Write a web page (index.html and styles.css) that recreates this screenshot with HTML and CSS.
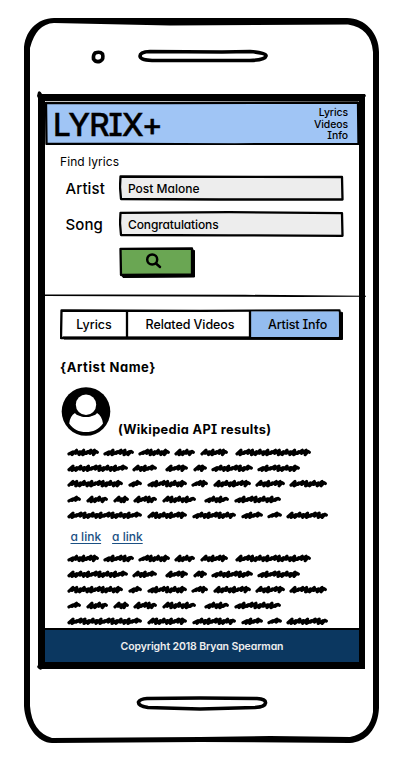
FILE: index.html
```html
<!DOCTYPE html>
<html lang="en">
<head>
<meta charset="utf-8">
<title>LYRIX+</title>
<link rel="stylesheet" href="styles.css">
</head>
<body>
<div class="phone">
  <svg class="frame" viewBox="0 0 402 768" aria-hidden="true">
    <path fill-rule="evenodd" d="M54 18H347C365 18 379 33 379 52V708C378 729 366 742 350 743L200 742L52 743C38 743 25 726 24 706V50C24 32 37 18 54 18ZM54 23Q36 24 30 48V706Q32 732 52 738L200 737L270 736L350 737Q370 733 373 712V52Q371 28 348 24.500L170 25.500Z"/>
    <path fill-rule="evenodd" d="M37 96L38 92Q40 90 42 94L365 94L366 96L365 97V669L42 669Q40 671 37 667L38 665V98ZM45 101V662H359V101Z"/>
    <g class="pen">
      <path d="M95 53Q100 51 102.500 54Q104 59 100.500 61Q96 63 93.500 59Q93 55 95 53Z"/>
      <path d="M150 51.500L222 52L250 51.500Q267 53 266 56Q265 60 250 60.500L152 60.500Q140 60 140 56Q140 52 150 51.500Z"/>
      <path d="M147 698.500L200 698L257 698.500Q266 699 265.500 703Q265 707 255 707.500L200 709L148 707.500Q138 706 138.500 702Q140 699 147 698.500Z"/>
    </g>
  </svg>
  <div class="screen">
    <header class="header">
      <svg class="sketch" viewBox="0 0 314 44" aria-hidden="true"><path d="M1 1.800L120 2L313 1.500L313.500 43L190 43.300L80 43L1.500 43Z"/></svg>
      <h1 class="brand">LYRIX+</h1>
      <nav class="nav"><span>Lyrics</span><span>Videos</span><span>Info</span></nav>
    </header>
    <section class="search">
      <p class="hint">Find lyrics</p>
      <div class="row">
        <label class="label artist">Artist</label>
        <div class="field">
          <svg class="sketch" viewBox="0 0 225 26" aria-hidden="true"><path d="M1.500 1.500L223 2L223.500 24.500L100 24.500L2 24L1 12Z"/></svg>
          <span class="post">Post Malone</span>
        </div>
      </div>
      <div class="row">
        <label class="label song">Song</label>
        <div class="field">
          <svg class="sketch" viewBox="0 0 225 26" aria-hidden="true"><path d="M1.500 1.800L110 1.200L223 2.200L223.500 24.800L110 24.300L2 24L1 12Z"/></svg>
          <span class="congrats">Congratulations</span>
        </div>
      </div>
      <div class="button">
        <svg class="sketch" viewBox="0 0 77 32" aria-hidden="true"><path class="shade" d="M73 2.500L75.500 3.500V30L4 30.500L3 28L73 27Z"/><path d="M1.500 1.800L73 1.500L73 27.500L2 28Z"/></svg>
        <svg class="lens" viewBox="0 0 16 16" aria-hidden="true"><circle cx="6.700" cy="6.500" r="5"/><path d="M10.500 10.500L14.500 14"/></svg>
      </div>
    </section>
    <svg class="rule" viewBox="0 0 321 4" aria-hidden="true"><path d="M0 .6L60 .5L200 .8L321 1.800L321 2.800L250 3L0 2.100Z"/></svg>
    <nav class="tabs">
      <svg class="sketch" viewBox="0 0 284 32" aria-hidden="true"><path class="shade" d="M280 3L282.500 3.500V30.500L4 30L3 28L280 28Z"/><path d="M1.500 1.500L140 1.800L279.500 1.500L280 29L1 29Z"/><path class="active" d="M190 2.500H278.800V28H190Z"/><path d="M67 2V29M190 2V29"/></svg>
      <span class="tab t1">Lyrics</span><span class="tab t2">Related Videos</span><span class="tab t3">Artist Info</span>
    </nav>
    <main class="content">
      <h2 class="name">{Artist Name}</h2>
      <div class="profile">
        <svg class="avatar" viewBox="0 0 50 50" aria-hidden="true"><circle cx="25" cy="24.500" r="24.300"/><path class="white" d="M14 26C17 31 33 31 36 26Q41 29 42 36.500C38 42.500 32 45 25 45C18 45 12 42.500 8.200 36.500Q9 29 14 26Z"/><circle cx="25" cy="17.700" r="12.300"/><circle class="white" cx="25" cy="17.700" r="10.200"/></svg>
        <h3 class="source">(Wikipedia API results)</h3>
      </div>
      <svg class="scribble" viewBox="0 0 270 78" aria-hidden="true"></svg>
      <div class="links"><a>a link</a><a>a link</a></div>
      <svg class="scribble" viewBox="0 0 270 78" aria-hidden="true"></svg>
    </main>
    <footer class="footer"><span>Copyright 2018 Bryan Spearman</span></footer>
  </div>
</div>
<script src="script.js"></script>
</body>
</html>
```
FILE: styles.css
```css
* { box-sizing: border-box; }
body { margin: 0; background: #fff; color: #000; font-family: Inter, "Noto Sans", sans-serif; font-feature-settings: "cv11", "cv08"; }
h1, h2, h3, p { margin: 0; }
svg { display: block; }
.phone { position: relative; width: 402px; height: 768px; padding: 101px 43px 0 45px; overflow: hidden; }
.frame { position: absolute; left: 0; top: 0; width: 402px; height: 768px; }
.pen { fill: none; stroke: #000; stroke-width: 3.6; stroke-linejoin: round; }
.screen { position: relative; width: 314px; height: 561px; display: flex; flex-direction: column; white-space: nowrap; }
.sketch { position: absolute; inset: 0; width: 100%; height: 100%; stroke: #000; stroke-width: 2.3; stroke-linejoin: round; fill: none; }
.sketch .shade { fill: #000; stroke-width: 1; }
.sketch .active { fill: #94bcef; stroke: none; }
.header { position: relative; height: 44px; display: flex; justify-content: space-between; padding: 5px 11px 0 8px; }
.header .sketch { fill: #a0c5f5; }
.brand { position: relative; font-size: 31.5px; line-height: 37px; font-weight: 500; letter-spacing: -1px; -webkit-text-stroke: .4px #000; }
.nav { position: relative; display: flex; flex-direction: column; align-items: flex-end; padding-top: 1px; font-size: 10.4px; line-height: 11.6px; font-weight: 500; letter-spacing: -.05px; }
.search { height: 149px; padding: 10px 0 0 15px; }
.hint { font-size: 12px; line-height: 14px; height: 20px; font-weight: 400; letter-spacing: .08px; }
.row { display: flex; height: 36px; }
.label { width: 59px; padding: 2px 0 0 5.500px; font-size: 15px; line-height: 24px; font-weight: 500; letter-spacing: .1px; }
.field { position: relative; width: 225px; height: 26px; padding-left: 9px; font-size: 12px; line-height: 28px; font-weight: 500; }
.field .sketch { fill: #ededed; }
.field span { position: relative; }
.congrats { letter-spacing: -.12px; }
.button { position: relative; margin-left: 59px; width: 77px; height: 32px; }
.button .sketch { fill: #6aa653; }
.lens { position: relative; left: 26px; top: 6px; width: 17px; height: 16px; fill: none; stroke: #000; stroke-width: 2.5; stroke-linecap: round; }
.rule { width: 321px; height: 4px; flex: none; }
.tabs { position: relative; width: 284px; height: 32px; margin: 11px 0 0 15px; display: flex; flex: none; font-size: 12.5px; line-height: 31px; font-weight: 500; }
.tab { position: relative; text-align: center; }
.t1 { width: 67px; padding-left: 1px; }
.t2 { width: 123px; padding-left: 3px; letter-spacing: -.08px; }
.t3 { width: 94px; padding-left: 1px; letter-spacing: -.15px; }
.content { padding: 18px 0 0 15px; }
.name { font-size: 13px; line-height: 16px; font-weight: 700; letter-spacing: .58px; }
.profile { display: flex; height: 50px; margin-top: 11.500px; align-items: flex-end; gap: 7px; padding-left: 1px; }
.avatar { width: 50px; height: 50px; }
.avatar .white { fill: #fff; }
.source { font-size: 12.8px; line-height: 14px; font-weight: 700; letter-spacing: .34px; }
.scribble { width: 270px; height: 78px; margin-top: 10px; margin-left: 5px; fill: none; stroke: #000; stroke-width: 3.2; stroke-linejoin: round; stroke-linecap: round; }
.links { display: flex; gap: 11px; height: 18px; padding: 4px 0 0 10.500px; font-size: 12px; line-height: 16px; color: #1b5083; font-weight: 500; }
.links a { text-decoration: underline; text-underline-offset: 2px; }
.footer { position: absolute; left: 0; top: 527px; width: 314px; height: 34px; border-top: 2px solid #000; background: #0b3760; color: #eee; text-align: center; font-size: 10.5px; line-height: 33px; font-weight: 600; letter-spacing: -.11px; }
```
FILE: script.js
```js
// Start and end of each scribbled word, line by line.
const lines = [
  [[2,34],[38,69],[73,105],[109,130],[135,163],[170,246]],
  [[2,63],[67,92],[100,123],[128,142],[146,188],[192,235]],
  [[2,58],[63,77],[82,122],[126,143],[148,186],[190,220],[224,262]],
  [[2,16],[21,43],[48,64],[68,92],[97,131],[139,164],[169,216]],
  [[2,77],[82,122],[127,171],[176,198],[202,217],[221,263]]
];
const centers = [5.3, 21.1, 36.5, 52.3, 68.1];
document.querySelectorAll('.scribble').forEach(svg => {
  let d = '';
  lines.forEach((words, row) => words.forEach(([a, b], w) => {
    const y = centers[row], count = Math.max(2, Math.round((b - a - 6) / 4));
    const step = (b - a - 7) / count;
    d += `M${a + 2} ${y + 1.6}`;
    for (let i = 0; i < count; i++) {
      const k = (i * 5 + w * 3 + row * 2) % 7;
      const x = a + 2 + i * step;
      d += `L${x + 4} ${y - (k % 3 ? 2 : .5)}L${x + 3} ${y + (k > 3 ? 1 : 2.3)}`;
    }
    d += `L${b - 3} ${y - .9}L${b - 1.7} ${y}`;
  }));
  const path = document.createElementNS('http://www.w3.org/2000/svg', 'path');
  path.setAttribute('d', d);
  svg.appendChild(path);
});
```
